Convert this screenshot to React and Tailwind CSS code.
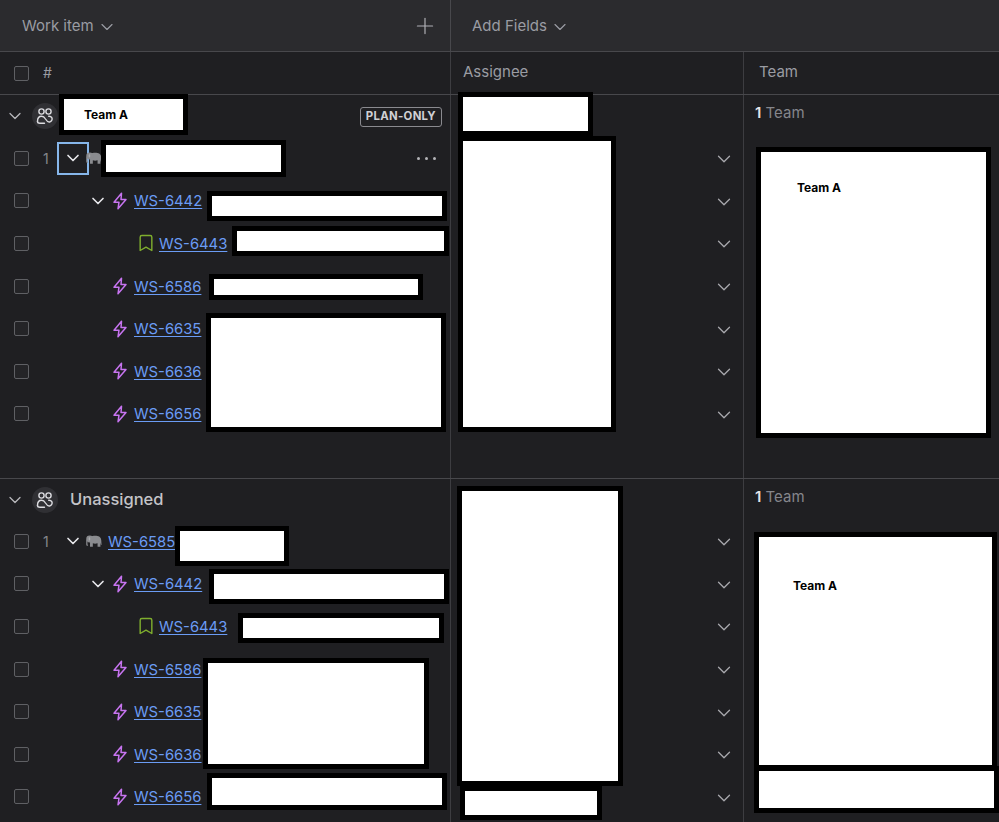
import React from "react";
import { ChevronDown, Plus, Bookmark } from "lucide-react";

const font = "font-['Inter',sans-serif]";
const cols = "grid grid-cols-[451px_293px_1fr]";

function Check() {
  return <span className="block w-[15px] h-[15px] rounded-[2px] border border-[#5f6064] bg-[#242427] shrink-0" />;
}

function Elephant() {
  return (
    <svg viewBox="0 0 18 14" className="w-[17px] h-[14px] shrink-0" fill="#8a8b8f">
      <path d="M6 2.500C8 1 13 1 15 2.200c1.800 1 2.300 3 2.300 5.300 0 1.500.2 2.500.4 3.500h-.9l-.5-2.500V13h-3V9.500c-1.800.5-3.500.5-5 0V13h-3V8.500z" />
      <circle cx="5" cy="5" r="3.700" />
      <path d="M1.300 5v5.800c0 1 .8 1.500 1.600 1.200.6-.2.5-.9 0-1-.3-.1-.3-.4-.3-.7V8z" />
      <path d="M5 2.800c-1.200.4-1.500 2-.7 3.400l1 .4c.4-1.400.3-3-.3-3.800z" fill="#a9aaae" />
    </svg>
  );
}

function Bolt() {
  return (
    <svg viewBox="0 0 16 18" className="w-[16px] h-[18px] shrink-0" fill="none" stroke="#c774f0" strokeWidth="1.500" strokeLinejoin="round">
      <path d="M9.500 1.200 2 10.200h5L6 16.800l8-9.300H9z" />
    </svg>
  );
}

function GroupAvatar() {
  return (
    <span className="w-[26px] h-[26px] rounded-full bg-[#303034] flex items-center justify-center shrink-0">
      <svg viewBox="0 0 18 18" className="w-[18px] h-[18px]" fill="none" stroke="#dcdce0" strokeWidth="1.400" strokeLinecap="round" strokeLinejoin="round">
        <circle cx="5.500" cy="4.500" r="2.600" />
        <circle cx="12.500" cy="4.500" r="2.600" />
        <path d="M1.500 14.500c0-3 1.500-5.200 4-5.200 2 0 3 1 4 2.700 1 1.600 2.500 3.800 4.500 2.800 2.200-1 2.600-3 1.700-4.300-.7-1-1.800-1.300-3-1.200" />
        <path d="M1.500 14.500c0 1.200 1 1.800 2.500 1.800h4.500" />
      </svg>
    </span>
  );
}

function Key({ id }) {
  return <a className="mt-[2px] text-[#6b9cf5] underline underline-offset-2 text-[14.800px] leading-none whitespace-nowrap">{id}</a>;
}

function Row({ num, level, kind, id, focus, menu }) {
  return (
    <div className={`${cols} h-[42.6px]`}>
      <div className="flex items-center border-r border-[#3d3d41] pl-[14px]">
        <Check />
        <span className="w-[28px] pl-[14px] text-[14px] text-[#85868c] shrink-0">{num}</span>
        {level === 0 && (
          <>
            <span className={`w-[32px] h-[33px] flex items-center justify-center shrink-0 ${focus ? "border-2 border-[#86b6ea]" : ""}`}>
              <ChevronDown className="w-[20px] h-[20px] text-[#e8e8ec]" strokeWidth={2} />
            </span>
            <span className="-ml-[4px] flex"><Elephant /></span>
            {id && <span className="ml-[6px] flex"><Key id={id} /></span>}
          </>
        )}
        {level === 1 && (
          <>
            <span className="w-[25px] ml-[28px] flex items-center justify-center shrink-0">
              {kind === "parent" && <ChevronDown className="w-[20px] h-[20px] text-[#e8e8ec]" strokeWidth={2} />}
            </span>
            <span className="w-[19px] mr-[5px] flex items-center justify-center shrink-0">
              <Bolt />
            </span>
            <Key id={id} />
          </>
        )}
        {level === 2 && (
          <>
            <span className="w-[15px] ml-[81px] flex items-center justify-center shrink-0 mr-[6px]">
              <Bookmark className="w-[20px] h-[20px] shrink-0 text-[#7fae2e]" strokeWidth={1.700} />
            </span>
            <Key id={id} />
          </>
        )}
        {menu && (
          <span className="ml-auto mr-[14px] flex gap-[5px]">
            <span className="w-[3px] h-[3px] rounded-full bg-[#b4b4b8]" />
            <span className="w-[3px] h-[3px] rounded-full bg-[#b4b4b8]" />
            <span className="w-[3px] h-[3px] rounded-full bg-[#b4b4b8]" />
          </span>
        )}
      </div>
      <div className="flex items-center justify-end pr-[8px] border-r border-[#3d3d41]">
        <ChevronDown className="mt-[2px] w-[22px] h-[22px] text-[#a8a8ad]" strokeWidth={1.400} />
      </div>
      <div />
    </div>
  );
}

function GroupHead({ name, badge, h }) {
  return (
    <div className={`${cols} ${h}`}>
      <div className="flex items-center border-r border-[#3d3d41] pl-[5px] pr-[8px]">
        <ChevronDown className="w-[20px] h-[20px] text-[#b8b8bd] shrink-0" strokeWidth={1.500} />
        <span className="ml-[7px]"><GroupAvatar /></span>
        <span className="ml-[12px] text-[16.500px] font-medium text-[#c4c4c8]">{name}</span>
        {badge && (
          <span className="ml-auto mt-[1px] px-[5px] h-[20px] flex items-center rounded-[3px] border border-[#8a8a8f] text-[11.400px] font-bold tracking-[.3px] text-[#d0d0d4]">
            PLAN-ONLY
          </span>
        )}
      </div>
      <div className="border-r border-[#3d3d41]" />
      <div className="pl-[11px] pt-[7px] text-[15px] text-[#85868c]">
        <span className="font-semibold text-[#e4e4e7]">1</span> Team
      </div>
    </div>
  );
}

const group1 = [
  { num: "1", level: 0, focus: true, menu: true },
  { level: 1, kind: "parent", id: "WS-6442" },
  { level: 2, id: "WS-6443" },
  { level: 1, id: "WS-6586" },
  { level: 1, id: "WS-6635" },
  { level: 1, id: "WS-6636" },
  { level: 1, id: "WS-6656" },
];

const group2 = [
  { num: "1", level: 0, id: "WS-6585" },
  { level: 1, kind: "parent", id: "WS-6442" },
  { level: 2, id: "WS-6443" },
  { level: 1, id: "WS-6586" },
  { level: 1, id: "WS-6635" },
  { level: 1, id: "WS-6636" },
  { level: 1, id: "WS-6656" },
];

const redact = "absolute bg-white border-[5px] border-black box-border flex text-black text-[12px] font-bold leading-none";

function Filler() {
  return (
    <div className={`${cols} flex-1`}>
      <div className="border-r border-[#3d3d41]" />
      <div className="border-r border-[#3d3d41]" />
    </div>
  );
}

export default function App() {
  return (
    <div className={`relative flex flex-col w-[999px] h-[822px] overflow-hidden bg-[#1f1f22] ${font}`}>
      <div className="grid grid-cols-[451px_1fr] h-[52px] shrink-0 bg-[#2b2b2e] border-b border-[#48484c]">
        <div className="flex items-center justify-between pl-[22px] pr-[12px] border-r border-[#48484c]">
          <span className="flex items-center gap-[3px] mt-[2px] text-[15px] text-[#9a9ca3]">
            Work item
            <ChevronDown className="w-[20px] h-[20px]" strokeWidth={1.400} />
          </span>
          <Plus className="w-[26px] h-[26px] text-[#b0b0b5]" strokeWidth={1.100} />
        </div>
        <div className="flex items-center pl-[21px]">
          <span className="flex items-center gap-[3px] mt-[2px] text-[15px] text-[#9a9ca3]">
            Add Fields
            <ChevronDown className="w-[20px] h-[20px]" strokeWidth={1.400} />
          </span>
        </div>
      </div>

      <div className={`${cols} h-[43px] shrink-0 border-b border-[#48484c] text-[15px] text-[#9a9ca3]`}>
        <div className="flex items-center pl-[14px] border-r border-[#3d3d41]">
          <Check />
          <span className="ml-[14px] mb-[2px] text-[14px]">#</span>
        </div>
        <div className="flex items-center pl-[12px] pb-[1px] border-r border-[#3d3d41]">Assignee</div>
        <div className="flex items-center pl-[15px] pb-[1px]">Team</div>
      </div>

      <div className="h-[384px] shrink-0 border-b border-[#48484c] flex flex-col">
        <GroupHead name="" badge h="h-[42px]" />
        {group1.map((r, i) => <Row key={i} {...r} />)}
        <Filler />
      </div>

      <div className="flex flex-col flex-1">
        <GroupHead name="Unassigned" h="h-[41px]" />
        {group2.map((r, i) => <Row key={i} {...r} />)}
        <Filler />
      </div>

      <div className={`${redact} left-[59px] top-[94px] w-[129px] h-[41px] pl-[20px] pt-[1px] items-center`}>Team A</div>
      <div className={`${redact} left-[101px] top-[140px] w-[185px] h-[37px]`} />
      <div className={`${redact} left-[207px] top-[191px] w-[240px] h-[30px]`} />
      <div className={`${redact} left-[232px] top-[226px] w-[217px] h-[30px]`} />
      <div className={`${redact} left-[209px] top-[274px] w-[214px] h-[26px]`} />
      <div className={`${redact} left-[206px] top-[313px] w-[240px] h-[119px]`} />
      <div className={`${redact} left-[458px] top-[92px] w-[135px] h-[44px]`} />
      <div className={`${redact} left-[458px] top-[136px] w-[158px] h-[296px]`} />
      <div className={`${redact} left-[756px] top-[147px] w-[235px] h-[291px] pl-[36px] pt-[30px]`}>Team A</div>

      <div className={`${redact} left-[175px] top-[526px] w-[114px] h-[40px]`} />
      <div className={`${redact} left-[209px] top-[569px] w-[240px] h-[35px]`} />
      <div className={`${redact} left-[238px] top-[613px] w-[206px] h-[30px]`} />
      <div className={`${redact} left-[203px] top-[658px] w-[226px] h-[111px]`} />
      <div className={`${redact} left-[207px] top-[773px] w-[240px] h-[37px]`} />
      <div className={`${redact} left-[457px] top-[486px] w-[166px] h-[300px]`} />
      <div className={`${redact} left-[460px] top-[786px] w-[142px] h-[34px]`} />
      <div className={`${redact} left-[754px] top-[532px] w-[243px] h-[238px] pl-[34px] pt-[43px]`}>Team A</div>
      <div className={`${redact} left-[754px] top-[766px] w-[245px] h-[47px]`} />
    </div>
  );
}
